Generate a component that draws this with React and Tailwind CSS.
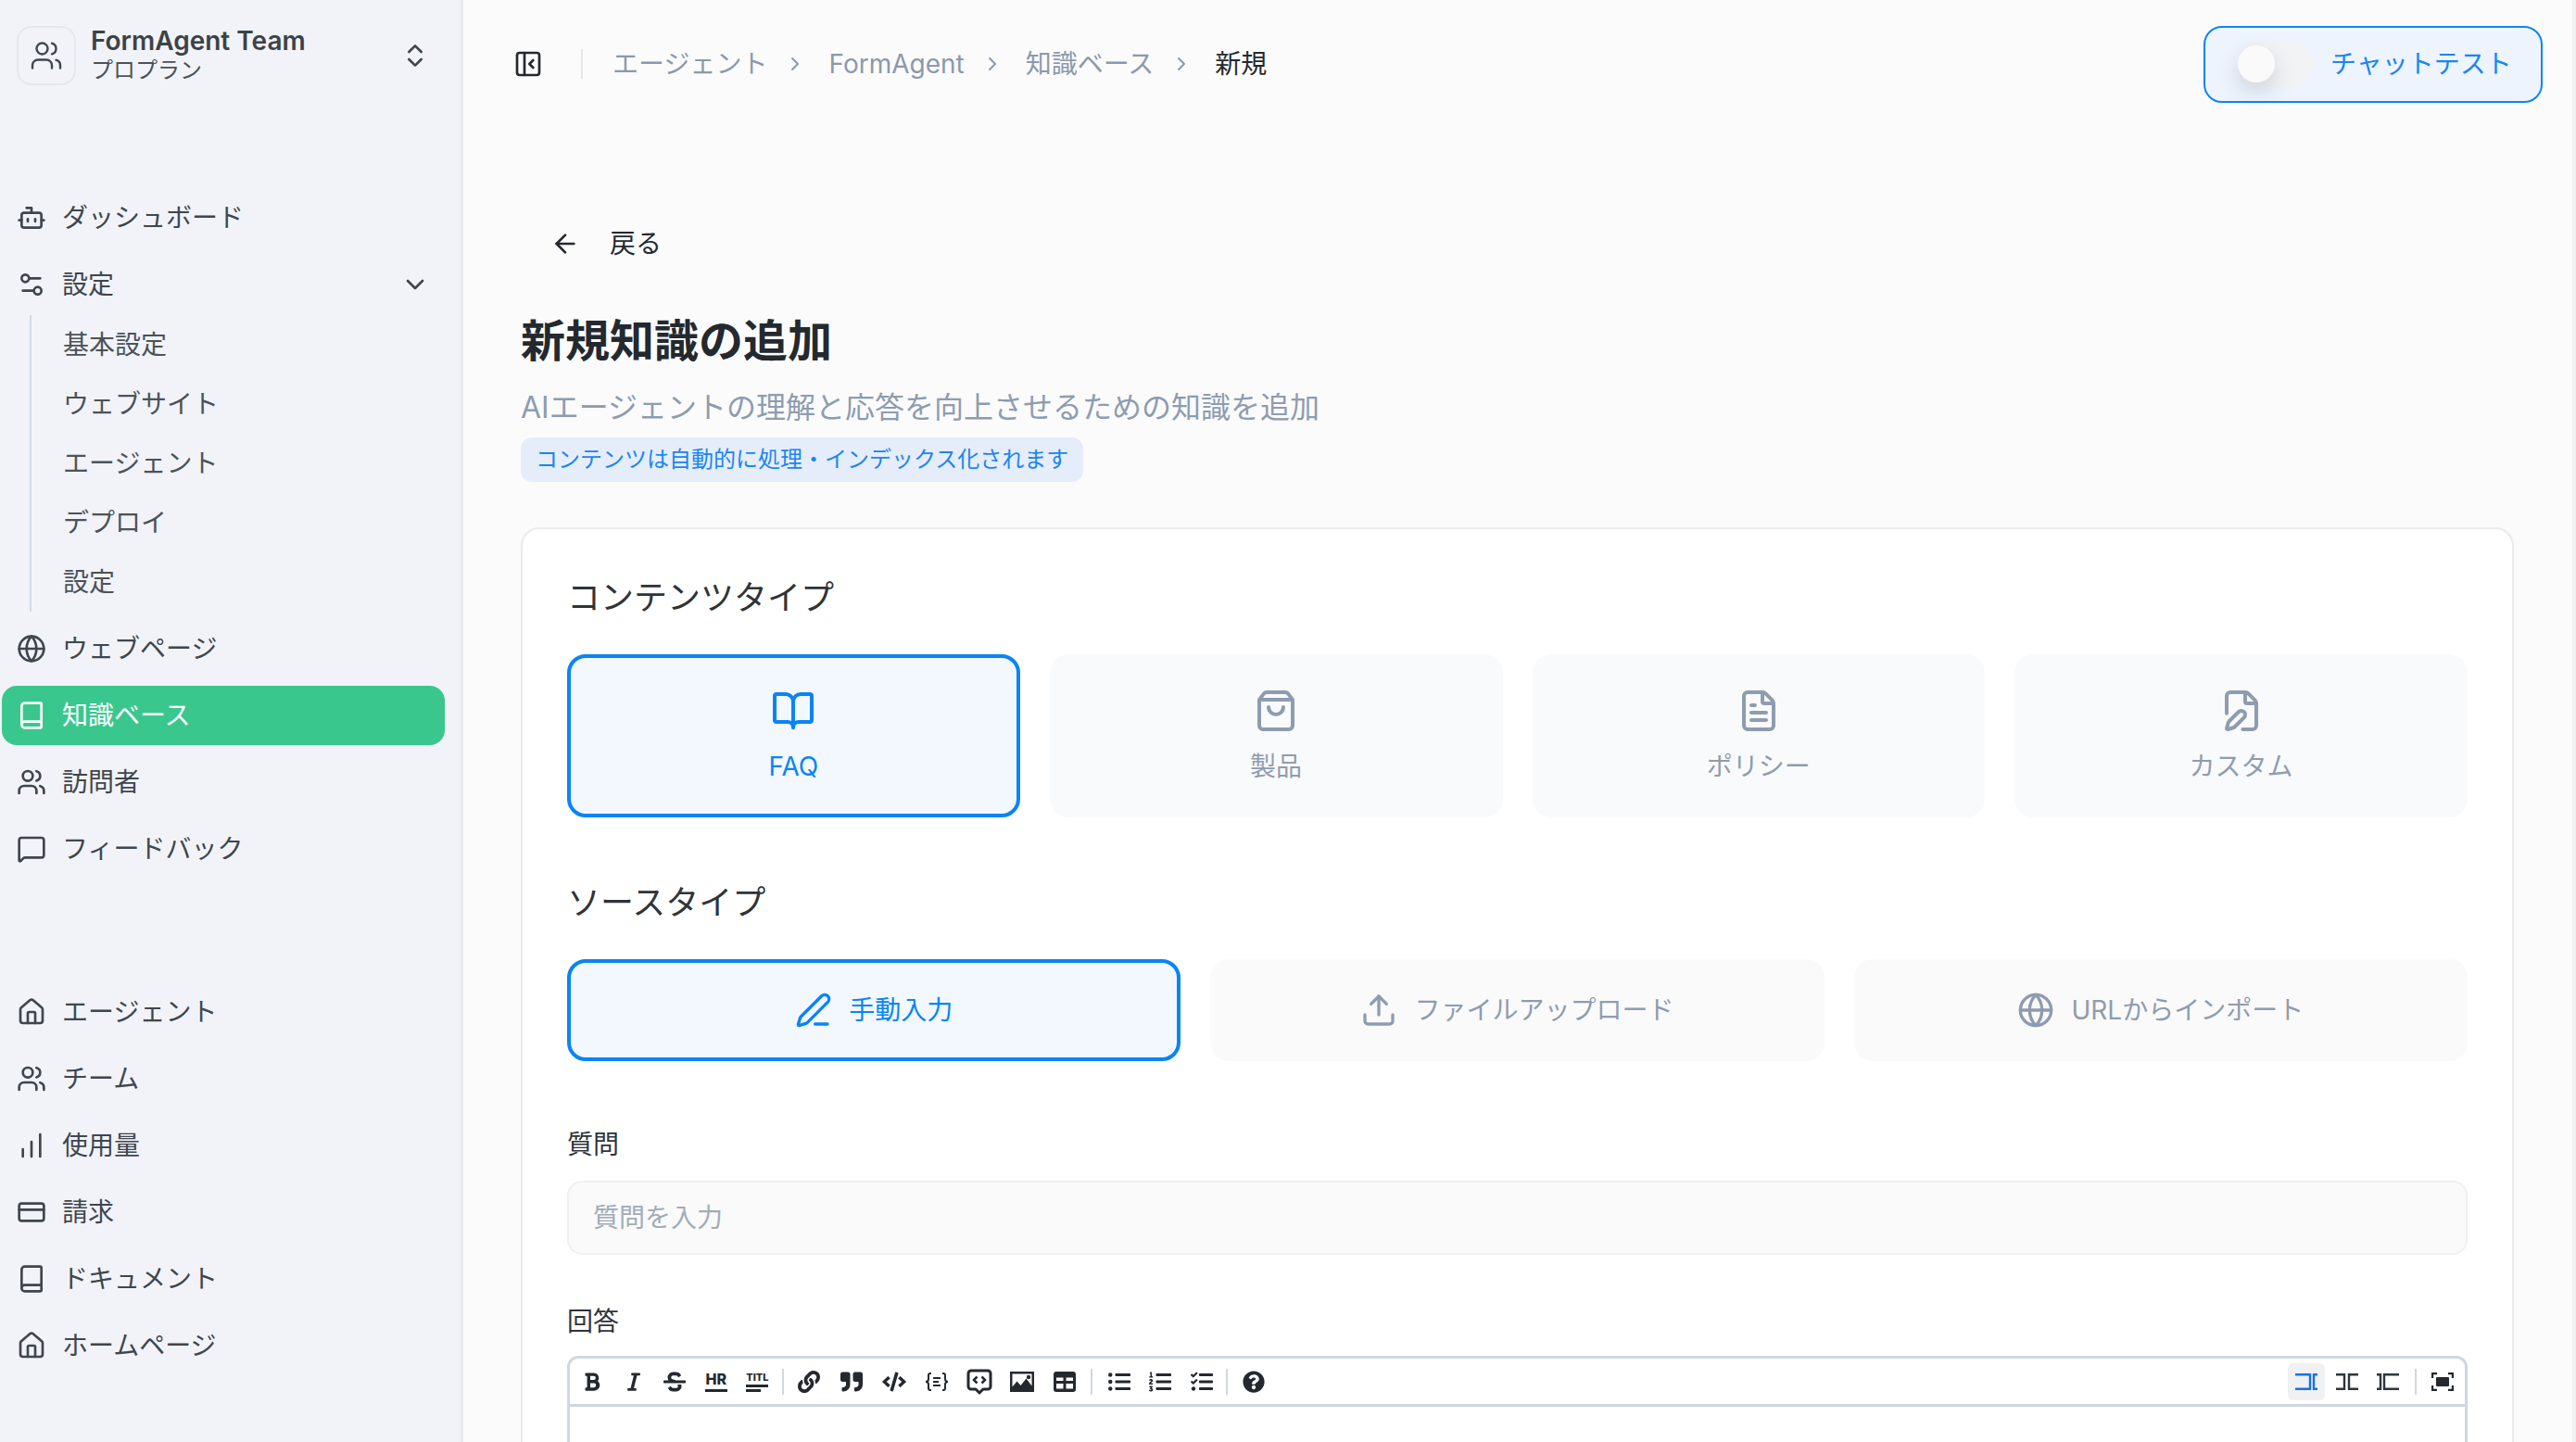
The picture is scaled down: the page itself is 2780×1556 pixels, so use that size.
import React from 'react'
import {
  ArrowLeft,
  Book,
  BookOpen,
  Bot,
  ChartNoAxesColumnIncreasing,
  ChevronDown,
  ChevronRight,
  ChevronsUpDown,
  CreditCard,
  FilePen,
  FileText,
  Globe,
  House,
  MessageSquare,
  PanelLeftClose,
  PenLine,
  Settings2,
  ShoppingBag,
  Upload,
  Users,
} from 'lucide-react'
import {
  FaBold,
  FaCode,
  FaItalic,
  FaLink,
  FaListOl,
  FaListUl,
  FaQuestionCircle,
  FaQuoteRight,
  FaStrikethrough,
  FaTasks,
} from 'react-icons/fa'

const font = "font-['Inter','Noto_Sans_CJK_JP',sans-serif]"

const topNav = [
  { label: 'ウェブページ', icon: Globe },
  { label: '知識ベース', icon: Book, active: true },
  { label: '訪問者', icon: Users },
  { label: 'フィードバック', icon: MessageSquare },
]

const bottomNav = [
  { label: 'エージェント', icon: House },
  { label: 'チーム', icon: Users },
  { label: '使用量', icon: ChartNoAxesColumnIncreasing },
  { label: '請求', icon: CreditCard },
  { label: 'ドキュメント', icon: Book },
  { label: 'ホームページ', icon: House },
]

const subNav = ['基本設定', 'ウェブサイト', 'エージェント', 'デプロイ', '設定']

const contentTypes = [
  { label: 'FAQ', icon: BookOpen, active: true },
  { label: '製品', icon: ShoppingBag },
  { label: 'ポリシー', icon: FileText },
  { label: 'カスタム', icon: FilePen },
]

const sourceTypes = [
  { label: '手動入力', icon: PenLine, active: true },
  { label: 'ファイルアップロード', icon: Upload },
  { label: 'URLからインポート', icon: Globe },
]

const NavRow = ({ label, icon: Icon, active, children }) => (
  <div
    className={`ml-[2px] flex h-16 w-[478px] items-center gap-[17px] rounded-2xl pl-[16px] pr-[16px] text-[28px] ${
      active ? 'bg-[#3ac78e] text-white' : 'text-[#3f464e]'
    }`}
  >
    <Icon size={32} strokeWidth={2} className="shrink-0" />
    <span className="flex-1">{label}</span>
    {children}
  </div>
)

const Sidebar = () => (
  <div className="flex h-full w-[500px] shrink-0 flex-col border-r-[3px] border-[#e8eaf0] bg-[#f1f3f8]">
    <div className="flex items-center pl-[18px] pr-[33px] pt-[28px]">
      <div className="flex h-16 w-16 items-center justify-center rounded-2xl border-2 border-[#e3e8ee] text-[#3f464e]">
        <Users size={36} strokeWidth={1.6} />
      </div>
      <div className="ml-[16px] flex-1">
        <div className="text-[28px] font-semibold leading-8 text-[#3c4249]">FormAgent Team</div>
        <div className="text-[24px] leading-8 text-[#4b525a]">プロプラン</div>
      </div>
      <ChevronsUpDown size={32} strokeWidth={2} className="text-[#3f464e]" />
    </div>
    <div className="mt-[111px] flex flex-col gap-2">
      <NavRow label="ダッシュボード" icon={Bot} />
      <div>
        <NavRow label="設定" icon={Settings2}>
          <ChevronDown size={32} strokeWidth={2} />
        </NavRow>
        <div className="ml-[32px] mt-px border-l-2 border-[#d3dae5] pl-[34px]">
          {subNav.map((item) => (
            <div key={item} className="flex h-16 items-center text-[28px] text-[#4b525a]">
              {item}
            </div>
          ))}
        </div>
      </div>
      {topNav.map((item) => (
        <NavRow key={item.label} {...item} />
      ))}
    </div>
    <div className="mt-[112px] flex flex-col gap-2">
      {bottomNav.map((item) => (
        <NavRow key={item.label} {...item} />
      ))}
    </div>
  </div>
)

const Crumb = ({ children }) => (
  <>
    <span className="text-[28px] text-[#8b99ad]">{children}</span>
    <ChevronRight size={24} strokeWidth={2} className="ml-[18px] mr-[24px] text-[#8b99ad]" />
  </>
)

const Header = () => (
  <div className="flex h-[138px] shrink-0 items-center pl-[54px] pr-[32px]">
    <PanelLeftClose size={32} strokeWidth={2} className="text-[#24292f]" />
    <div className="ml-[41px] mr-[32px] h-8 w-[2px] bg-[#e5e8ec]" />
    <Crumb>エージェント</Crumb>
    <Crumb>FormAgent</Crumb>
    <Crumb>知識ベース</Crumb>
    <span className="text-[28px] text-[#24292f]">新規</span>
    <div className="ml-auto flex h-[83px] w-[366px] items-center gap-[18px] rounded-[20px] border-2 border-[#0d84f7] bg-[#edf4fd] pl-[35px]">
      <div className="flex h-[50px] w-[82px] items-center rounded-full bg-[#f1f3f5]">
        <div className="h-10 w-10 rounded-full bg-[#fafafa] shadow-[0_10px_24px_rgba(30,40,60,0.16)]" />
      </div>
      <span className="text-[28px] text-[#1a85f2]">チャットテスト</span>
    </div>
  </div>
)

const TypeCard = ({ label, icon: Icon, active }) => (
  <div
    className={`flex h-[176px] flex-col items-center justify-center gap-[18px] rounded-[20px] ${
      active ? 'border-4 border-[#0a84f5] bg-[#f3f8fe] text-[#0a84f5]' : 'bg-[#f9fafb] text-[#8e9cb0]'
    }`}
  >
    <Icon size={48} strokeWidth={2} />
    <span className="text-[28px] leading-9">{label}</span>
  </div>
)

const SourceCard = ({ label, icon: Icon, active }) => (
  <div
    className={`flex h-[110px] items-center justify-center gap-[18px] rounded-[20px] ${
      active ? 'border-4 border-[#0a84f5] bg-[#f3f8fe] text-[#0a84f5]' : 'bg-[#fafafa] text-[#8e9cb0]'
    }`}
  >
    <Icon size={40} strokeWidth={2} />
    <span className="text-[28px]">{label}</span>
  </div>
)

const ToolBtn = ({ children }) => (
  <div className="flex h-10 w-[44.5px] items-center justify-center text-[#24292f]">{children}</div>
)

const WideBtn = ({ children }) => (
  <div className="flex h-10 w-[46px] items-center justify-center text-[#24292f]">{children}</div>
)

const ToolSep = ({ className = 'mx-[4px]' }) => <div className={`h-7 w-[2px] bg-[#d1d7e0] ${className}`} />

const HrIcon = () => (
  <div className="flex w-[24px] flex-col items-center">
    <span className="text-[16px] font-extrabold leading-[16px]">HR</span>
    <div className="mt-[3px] h-[3px] w-full bg-[#24292f]" />
  </div>
)

const TitleIcon = () => (
  <div className="flex w-[24px] flex-col">
    <span className="text-center text-[11px] font-extrabold leading-[12px]">TITL</span>
    <div className="mt-[2px] h-[3px] w-full bg-[#24292f]" />
    <div className="mt-[2px] h-[3px] w-[16px] bg-[#24292f]" />
  </div>
)

const BracesIcon = () => (
  <svg width="26" height="24" viewBox="0 0 26 24" fill="none" stroke="currentColor" strokeWidth="2">
    <path d="M7 3H6C4.500 3 4 4 4 5v4c0 2-1 3-3 3 2 0 3 1 3 3v4c0 1 .5 2 2 2h1" />
    <path d="M19 3h1c1.500 0 2 1 2 2v4c0 2 1 3 3 3-2 0-3 1-3 3v4c0 1-.5 2-2 2h-1" />
    <path d="M9 8h8M9 12h6M9 16h8" />
  </svg>
)

const CommentCodeIcon = () => (
  <svg width="28" height="28" viewBox="0 0 28 28" fill="none" stroke="currentColor">
    <path d="M5 2h18a3 3 0 0 1 3 3v14a3 3 0 0 1-3 3h-5l-4 4-4-4H5a3 3 0 0 1-3-3V5a3 3 0 0 1 3-3z" strokeWidth="3" strokeLinejoin="round" />
    <path d="M11.500 8.500 8 12l3.500 3.500M16.500 8.500 20 12l-3.500 3.500" strokeWidth="2.500" />
  </svg>
)

const ImageIcon = () => (
  <svg width="26" height="24" viewBox="0 0 26 24" fill="currentColor">
    <path fillRule="evenodd" d="M0 1h26v22H0zM2.500 3.500v14l5-6 4 4.500 6-7.500 6 8V3.500z" />
    <circle cx="20" cy="7" r="2.200" />
  </svg>
)

const TableIcon = () => (
  <svg width="24" height="24" viewBox="0 0 24 24" fill="currentColor">
    <path
      fillRule="evenodd"
      d="M3 1h18a3 3 0 0 1 3 3v16a3 3 0 0 1-3 3H3a3 3 0 0 1-3-3V4a3 3 0 0 1 3-3zM3 7.500V11h7.500V7.500zM13.500 7.500V11H21V7.500zM3 14v5.500h7.500V14zM13.500 14v5.500H21V14z"
    />
  </svg>
)

const LayoutIcon = ({ d }) => (
  <svg width="24" height="18" viewBox="0 0 24 18" fill="none" stroke="currentColor" strokeWidth="2.400">
    <path d={d} />
  </svg>
)

const FullscreenIcon = () => (
  <svg width="24" height="20" viewBox="0 0 24 20" fill="none" stroke="currentColor" strokeWidth="2.400">
    <path d="M1 6V1h5M18 1h5v5M23 14v5h-5M6 19H1v-5" />
    <rect x="5" y="5" width="14" height="10" rx="1" fill="currentColor" stroke="none" />
  </svg>
)

const Toolbar = () => (
  <div className="flex h-[52px] items-center border-b-[3px] border-[#d1d7e0] pl-[2px] pr-[4px]">
    <ToolBtn><FaBold size={22} /></ToolBtn>
    <ToolBtn><FaItalic size={22} /></ToolBtn>
    <ToolBtn><FaStrikethrough size={24} /></ToolBtn>
    <ToolBtn><HrIcon /></ToolBtn>
    <ToolBtn><TitleIcon /></ToolBtn>
    <ToolSep />
    <WideBtn><FaLink size={24} /></WideBtn>
    <WideBtn><FaQuoteRight size={24} /></WideBtn>
    <WideBtn><FaCode size={26} /></WideBtn>
    <WideBtn><BracesIcon /></WideBtn>
    <WideBtn><CommentCodeIcon /></WideBtn>
    <WideBtn><ImageIcon /></WideBtn>
    <WideBtn><TableIcon /></WideBtn>
    <ToolSep className="ml-[5px] mr-[7px]" />
    <ToolBtn><FaListUl size={24} /></ToolBtn>
    <ToolBtn><FaListOl size={24} /></ToolBtn>
    <ToolBtn><FaTasks size={24} /></ToolBtn>
    <ToolSep className="ml-[4px] mr-[6px]" />
    <ToolBtn><FaQuestionCircle size={24} /></ToolBtn>
    <div className="ml-auto flex items-center gap-1">
      <div className="flex h-10 w-10 items-center justify-center rounded-md bg-[#eff1f3] text-[#1a6fe8]">
        <LayoutIcon d="M0 1.200H16V16.800H0M24 1.200H20V16.800H24" />
      </div>
      <div className="flex h-10 w-10 items-center justify-center text-[#2f353b]">
        <LayoutIcon d="M0 1.200H9V16.800H0M24 1.200H14V16.800H24" />
      </div>
      <div className="flex h-10 w-10 items-center justify-center text-[#2f353b]">
        <LayoutIcon d="M0 1.200H4V16.800H0M24 1.200H8V16.800H24" />
      </div>
      <div className="ml-[5px] mr-[4px] h-7 w-[2px] bg-[#d1d7e0]" />
      <div className="flex h-10 w-10 items-center justify-center text-[#24292f]">
        <FullscreenIcon />
      </div>
    </div>
  </div>
)

const App = () => (
  <div className={`flex h-[1556px] w-full overflow-hidden bg-[#fbfbfc] ${font}`}>
    <Sidebar />
    <div className="flex h-full min-w-0 flex-1 flex-col overflow-hidden">
      <Header />
      <div className="shrink-0 pl-[62px] pr-[63px]">
        <div className="mt-[105px] flex h-10 items-center gap-[32px] pl-[32px] text-[28px] text-[#24292f]">
          <ArrowLeft size={32} strokeWidth={2} />
          <span>戻る</span>
        </div>
        <h1 className="mt-[55px] text-[48px] font-bold leading-[60px] text-[#24292f]">新規知識の追加</h1>
        <p className="mt-[20px] text-[32px] leading-[44px] text-[#8e9cb0]">
          AIエージェントの理解と応答を向上させるための知識を追加
        </p>
        <div className="mt-[10px] flex h-12 w-fit items-center rounded-xl bg-[#e5edfb] px-4 text-[24px] text-[#1a85f2]">
          コンテンツは自動的に処理・インデックス化されます
        </div>
        <div className="mt-[49px] rounded-[20px] border-2 border-[#e8eaed] bg-white px-[48px] pt-[50px]">
          <h2 className="text-[36px] font-normal leading-[48px] text-[#2f3439]">コンテンツタイプ</h2>
          <div className="mt-[37px] grid grid-cols-4 gap-8">
            {contentTypes.map((item) => (
              <TypeCard key={item.label} {...item} />
            ))}
          </div>
          <h2 className="mt-[68px] text-[36px] font-normal leading-[48px] text-[#2f3439]">ソースタイプ</h2>
          <div className="mt-[37px] grid grid-cols-3 gap-8">
            {sourceTypes.map((item) => (
              <SourceCard key={item.label} {...item} />
            ))}
          </div>
          <div className="mt-[72px] text-[28px] leading-9 text-[#2f3439]">質問</div>
          <div className="mt-[21px] flex h-20 items-center rounded-2xl border-2 border-[#f0f0f0] bg-[#fafafa] px-[26px] text-[28px] text-[#a2abb8]">
            質問を入力
          </div>
          <div className="mt-[54px] text-[28px] leading-9 text-[#2f3439]">回答</div>
          <div className="mt-[19px] h-[300px] rounded-xl border-[3px] border-[#d1d7e0] bg-white">
            <Toolbar />
          </div>
        </div>
      </div>
    </div>
    <div className="h-full w-[4px] shrink-0 bg-[#f0f0f0]" />
  </div>
)

export default App
